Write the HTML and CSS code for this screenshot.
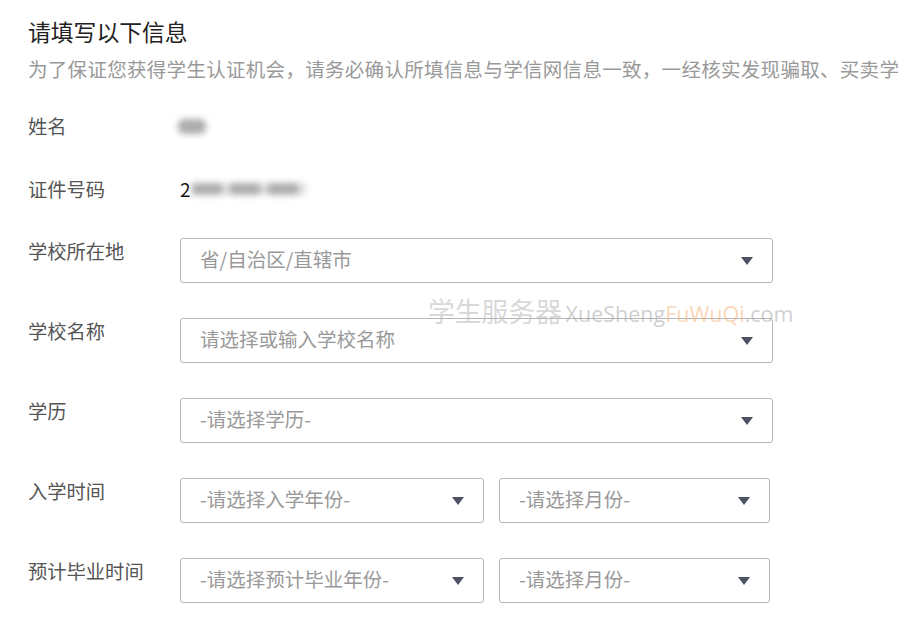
FILE: index.html
```html
<!DOCTYPE html>
<html lang="zh-CN">
<head>
<meta charset="utf-8">
<title>请填写以下信息</title>
<link rel="stylesheet" href="styles.css">
</head>
<body>
<div class="page">
  <h1 class="title">请填写以下信息</h1>
  <p class="subtitle">为了保证您获得学生认证机会，请务必确认所填信息与学信网信息一致，一经核实发现骗取、买卖学</p>

  <div class="form">
    <div class="row static first">
      <div class="label">姓名</div>
      <div class="value"><span class="blur blur-name"></span></div>
    </div>
    <div class="row static">
      <div class="label">证件号码</div>
      <div class="value"><span class="id-first">2</span><span class="blur blur-id"></span></div>
    </div>
    <div class="row">
      <div class="label">学校所在地</div>
      <div class="select wide"><span class="placeholder">省/自治区/直辖市</span><span class="arrow"></span></div>
    </div>
    <div class="row">
      <div class="label">学校名称</div>
      <div class="select wide"><span class="placeholder">请选择或输入学校名称</span><span class="arrow"></span></div>
    </div>
    <div class="row">
      <div class="label">学历</div>
      <div class="select wide"><span class="placeholder">-请选择学历-</span><span class="arrow"></span></div>
    </div>
    <div class="row">
      <div class="label">入学时间</div>
      <div class="pair">
        <div class="select year"><span class="placeholder">-请选择入学年份-</span><span class="arrow"></span></div>
        <div class="select month"><span class="placeholder">-请选择月份-</span><span class="arrow"></span></div>
      </div>
    </div>
    <div class="row">
      <div class="label">预计毕业时间</div>
      <div class="pair">
        <div class="select year"><span class="placeholder">-请选择预计毕业年份-</span><span class="arrow"></span></div>
        <div class="select month"><span class="placeholder">-请选择月份-</span><span class="arrow"></span></div>
      </div>
    </div>
  </div>

  <div class="watermark"><span class="wm-cn">学生服务器</span> <span class="wm-en">XueSheng<span class="wm-accent">FuWuQi</span>.com</span></div>
</div>
</body>
</html>
```

FILE: styles.css
```css
html, body {
  margin: 0;
  padding: 0;
  background: #ffffff;
}

body {
  font-family: "Noto Sans CJK SC", "Noto Sans", sans-serif;
  overflow: hidden;
  width: 900px;
  height: 623px;
}

.page {
  position: relative;
  padding: 17px 0 0 28px;
  white-space: nowrap;
}

.title {
  margin: 0;
  font-size: 22.8px;
  line-height: 30px;
  font-weight: 400;
  color: #222;
}

.subtitle {
  margin: 8px 0 0;
  font-size: 19.5px;
  letter-spacing: 0.3px;
  line-height: 28px;
  color: #999;
}

.form {
  display: flex;
  flex-direction: column;
  margin-top: 28px;
}

.row {
  display: flex;
  align-items: flex-start;
  margin-top: 35px;
}

.row.static {
  margin-top: 33px;
  height: 30px;
  align-items: center;
}

.row.first {
  margin-top: 0;
}

.row.static + .row:not(.static) {
  margin-top: 34px;
}

.label {
  width: 152px;
  flex: none;
  font-size: 19.3px;
  line-height: 27px;
  color: #555;
}

.row.static .label {
  line-height: 30px;
}

.value {
  display: flex;
  align-items: center;
  font-size: 19px;
  color: #111;
}

.blur {
  display: inline-block;
  background: #8a8a8a;
  filter: blur(3px);
  opacity: 0.7;
}

.blur-name {
  width: 28px;
  height: 15px;
  margin-left: -2px;
  border-radius: 6px;
}

.id-first {
  line-height: 30px;
}

.blur-id {
  width: 114px;
  height: 12px;
  margin-left: 1px;
  background: repeating-linear-gradient(90deg, #8a8a8a 0 30px, #d4d4d4 30px 38px);
}

.select {
  box-sizing: border-box;
  height: 45px;
  border: 1px solid #b3b5b9;
  border-radius: 3px;
  display: flex;
  align-items: center;
  justify-content: space-between;
  padding: 0 19px 0 19px;
  background: #fff;
}

.select.wide {
  width: 593px;
}

.pair {
  display: flex;
  gap: 15px;
}

.select.year {
  width: 304px;
}

.select.month {
  width: 271px;
}

.placeholder {
  font-size: 19.5px;
  line-height: 26px;
  margin-top: -3px;
  color: #999;
}

.arrow {
  width: 0;
  height: 0;
  border-left: 6px solid transparent;
  border-right: 6px solid transparent;
  border-top: 8px solid #4c5163;
  margin-top: 0;
}

.watermark {
  position: absolute;
  left: 428px;
  top: 293px;
  line-height: 36px;
  pointer-events: none;
}

.wm-cn {
  font-size: 26.8px;
  color: rgba(190, 190, 190, 0.6);
}

.wm-en {
  font-family: "Open Sans", "Noto Sans", sans-serif;
  font-size: 21.5px;
  color: rgba(175, 175, 175, 0.6);
}

.wm-accent {
  color: rgba(244, 190, 140, 0.65);
}
```
